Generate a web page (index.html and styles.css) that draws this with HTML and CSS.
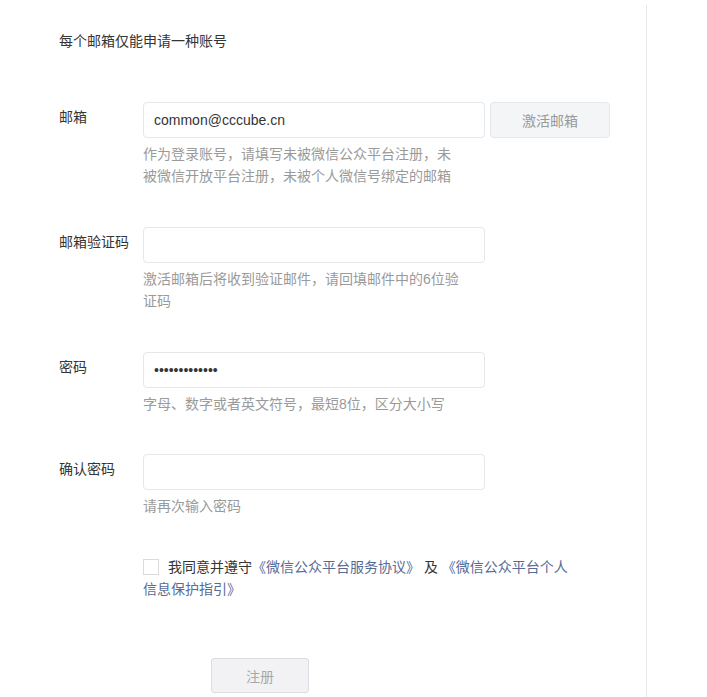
FILE: index.html
```html
<!DOCTYPE html>
<html lang="zh-CN">
<head>
<meta charset="utf-8">
<title>注册</title>
<link rel="stylesheet" href="styles.css">
</head>
<body>
<div class="page">
  <div class="title">每个邮箱仅能申请一种账号</div>
  <form class="form">
    <div class="row">
      <label class="label">邮箱</label>
      <div class="field">
        <div class="control">
          <input class="input" type="text" value="common@cccube.cn">
          <button type="button" class="btn-side">激活邮箱</button>
        </div>
        <p class="hint">作为登录账号，请填写未被微信公众平台注册，未被微信开放平台注册，未被个人微信号绑定的邮箱</p>
      </div>
    </div>
    <div class="row">
      <label class="label">邮箱验证码</label>
      <div class="field">
        <div class="control"><input class="input" type="text" value=""></div>
        <p class="hint">激活邮箱后将收到验证邮件，请回填邮件中的6位验证码</p>
      </div>
    </div>
    <div class="row">
      <label class="label">密码</label>
      <div class="field">
        <div class="control"><input class="input" type="password" value="abcdefghijklm"></div>
        <p class="hint">字母、数字或者英文符号，最短8位，区分大小写</p>
      </div>
    </div>
    <div class="row">
      <label class="label">确认密码</label>
      <div class="field">
        <div class="control"><input class="input" type="password" value=""></div>
        <p class="hint">请再次输入密码</p>
      </div>
    </div>
    <p class="agree"><span class="check"></span>我同意并遵守<a class="link">《微信公众平台服务协议》</a> 及 <a class="link">《微信公众平台个人</a><a class="link">信息保护指引》</a></p>
    <div class="actions"><button type="button" class="btn-submit">注册</button></div>
  </form>
</div>
</body>
</html>
```
FILE: styles.css
```css
html, body {
  margin: 0;
  padding: 0;
  background: #fff;
}
body {
  font-family: "Liberation Sans", "Noto Sans CJK SC", sans-serif;
  font-size: 14px;
  color: #353535;
  text-spacing-trim: space-all;
}
.page {
  box-sizing: border-box;
  width: 647px;
  min-height: 692px;
  margin-top: 5px;
  padding: 25px 0 0 59px;
  border-right: 1px solid #e7e7eb;
}
.title {
  line-height: 22px;
}
.form {
  margin-top: 50px;
}
.row {
  display: flex;
  margin-bottom: 40px;
}
.row:nth-child(3) {
  margin-bottom: 39px;
}
.label {
  width: 84px;
  flex: none;
  line-height: 30px;
}
.field {
  display: flex;
  flex-direction: column;
}
.control {
  display: flex;
  gap: 5px;
}
.input {
  box-sizing: border-box;
  width: 342px;
  height: 36px;
  padding: 0 10px;
  border: 1px solid #e4e8eb;
  border-radius: 4px;
  font-family: "Liberation Sans", "Noto Sans CJK SC", sans-serif;
  font-size: 14px;
  color: #353535;
  background: #fff;
  outline: none;
}
.btn-side {
  box-sizing: border-box;
  width: 120px;
  height: 36px;
  border: 1px solid #e4e8eb;
  border-radius: 4px;
  background: #f4f5f7;
  color: #9a9a9a;
  font-family: "Liberation Sans", "Noto Sans CJK SC", sans-serif;
  font-size: 14px;
  padding: 0;
}
.hint {
  margin: 5px 0 0;
  width: 320px;
  line-height: 22px;
  color: #9a9a9a;
}
.agree {
  margin: -1px 0 0 84px;
  width: 432px;
  line-height: 22px;
}
.check {
  display: inline-block;
  box-sizing: border-box;
  width: 16px;
  height: 16px;
  border: 1px solid #d9dadc;
  background: #fff;
  vertical-align: -3px;
  margin-right: 9px;
}
.link {
  color: #576b95;
  text-decoration: none;
}
.actions {
  margin-top: 58px;
  padding-left: 152px;
}
.btn-submit {
  box-sizing: border-box;
  width: 98px;
  height: 35px;
  border: 1px solid #dcdde0;
  border-radius: 3px;
  background: #f2f2f4;
  color: #a8a8a8;
  font-family: "Liberation Sans", "Noto Sans CJK SC", sans-serif;
  font-size: 14px;
  padding: 0;
}
```
